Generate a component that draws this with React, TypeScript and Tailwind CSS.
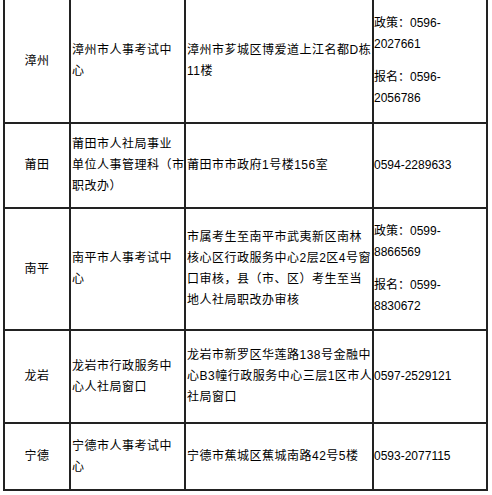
import { Fragment } from 'react';

const rows = [
  {
    city: '漳州',
    org: ['漳州市人事考试中', '心'],
    addr: ['漳州市芗城区博爱道上江名都D栋', '11楼'],
    phone: [['政策：0596-', '2027661'], ['报名：0596-', '2056786']],
  },
  {
    city: '莆田',
    org: ['莆田市人社局事业', '单位人事管理科（市', '职改办）'],
    addr: ['莆田市市政府1号楼156室'],
    phone: [['0594-2289633']],
  },
  {
    city: '南平',
    org: ['南平市人事考试中', '心'],
    addr: ['市属考生至南平市武夷新区南林', '核心区行政服务中心2层2区4号窗', '口审核，县（市、区）考生至当', '地人社局职改办审核'],
    phone: [['政策：0599-', '8866569'], ['报名：0599-', '8830672']],
  },
  {
    city: '龙岩',
    org: ['龙岩市行政服务中', '心人社局窗口'],
    addr: ['龙岩市新罗区华莲路138号金融中', '心B3幢行政服务中心三层1区市人', '社局窗口'],
    phone: [['0597-2529121']],
  },
  {
    city: '宁德',
    org: ['宁德市人事考试中', '心'],
    addr: ['宁德市蕉城区蕉城南路42号5楼'],
    phone: [['0593-2077115']],
  },
];

const Lines = ({ lines }: { lines: string[] }) => (
  <div>
    {lines.map((l, i) => (
      <div key={i} className="whitespace-nowrap">{l}</div>
    ))}
  </div>
);

export default function App() {
  return (
    <div className="min-h-screen bg-white">
      <div
        className="ml-[3px] -mt-[2px] grid w-[485px] grid-cols-[64px_113px_186px_112px] grid-rows-[122px_83px_120px_91px_65px] gap-[2px] bg-[#222] p-[2px] text-[12px] leading-[21px] tracking-[0.5px] text-black"
        style={{ fontFamily: '"Liberation Sans", "Noto Sans CJK SC", sans-serif' }}
      >
        {rows.map((r) => (
          <Fragment key={r.city}>
            <div className="flex items-center justify-center bg-white">{r.city}</div>
            <div className="flex items-center bg-white pl-[1px]">
              <Lines lines={r.org} />
            </div>
            <div className="flex items-center bg-white pl-[1px]">
              <Lines lines={r.addr} />
            </div>
            <div className="flex items-center bg-white tracking-normal">
              <div className="flex flex-col gap-[12px]">
                {r.phone.map((p, i) => (
                  <Lines key={i} lines={p} />
                ))}
              </div>
            </div>
          </Fragment>
        ))}
      </div>
    </div>
  );
}
